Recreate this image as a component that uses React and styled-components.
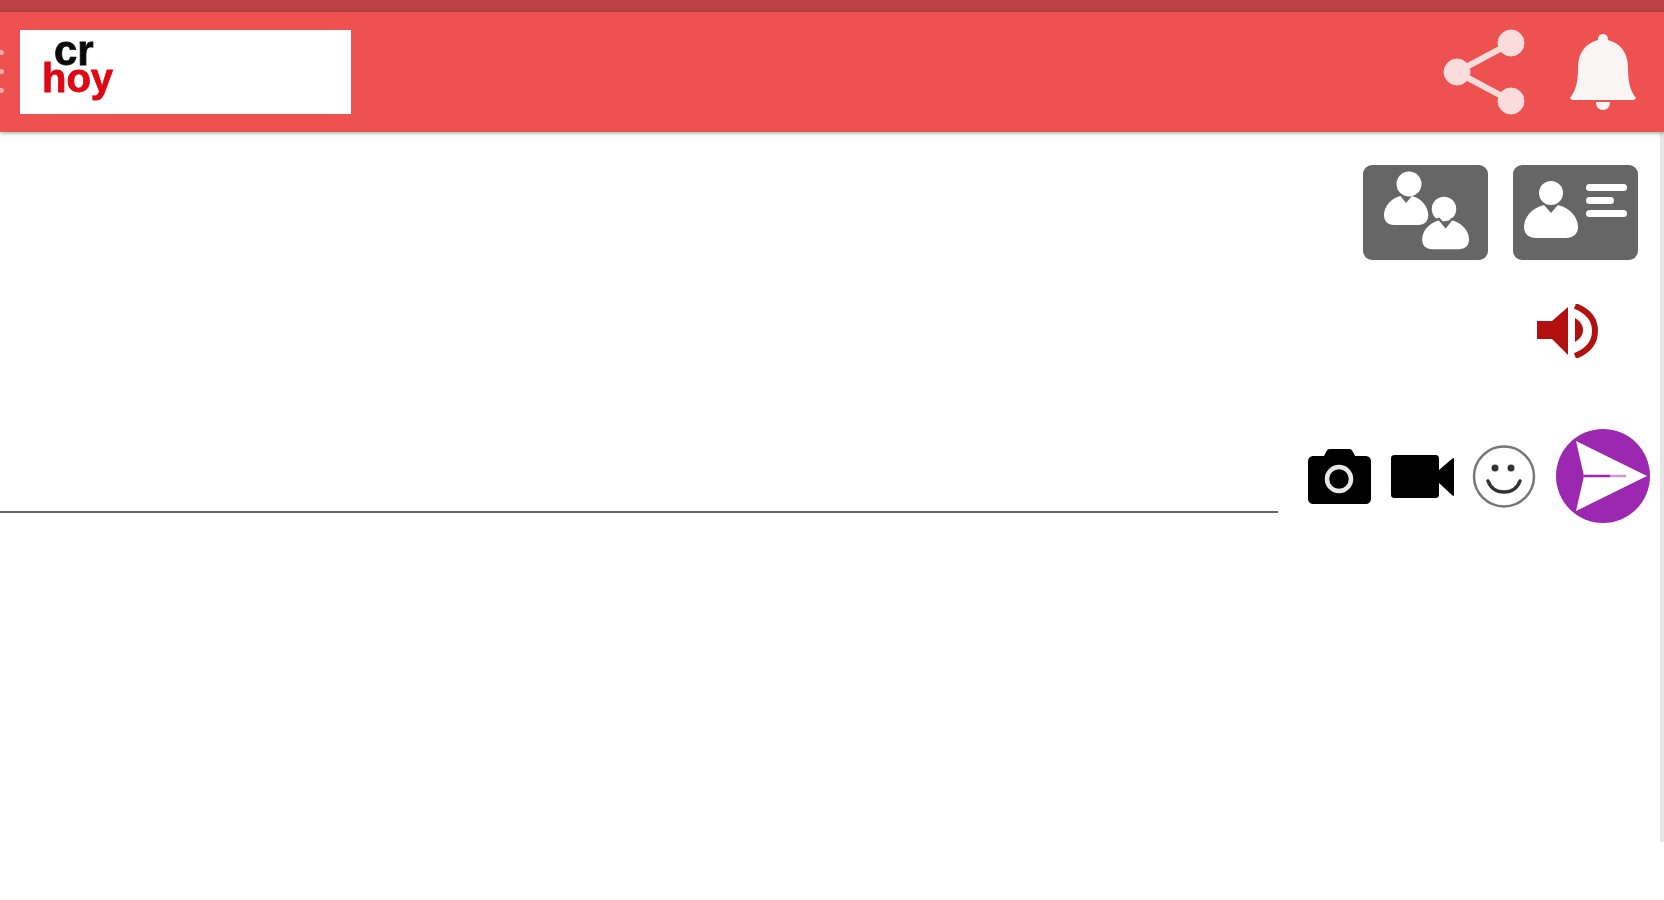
import React from "react";
import styled, { createGlobalStyle } from "styled-components";

const GlobalStyle = createGlobalStyle`
  html, body {
    margin: 0;
    padding: 0;
    background: #fff;
    font-family: "Liberation Sans", Arial, sans-serif;
  }
  * { box-sizing: border-box; }
`;

const Page = styled.div`
  width: 1664px;
  height: 900px;
  overflow: hidden;
  background: #fff;
  display: flex;
  flex-direction: column;
`;

const StatusStrip = styled.div`
  height: 12px;
  background: #bb4244;
`;

const Header = styled.header`
  height: 120px;
  background: #ee5250;
  box-shadow: 0 1px 4px rgba(0, 0, 0, 0.4);
  display: flex;
  align-items: center;
  position: relative;
  z-index: 1;
`;

const MenuDots = styled.div`
  width: 20px;
  display: flex;
  flex-direction: column;
  gap: 14px;
  margin-top: -2px;

  span {
    width: 4px;
    height: 5px;
    border-radius: 0 3px 3px 0;
    background: #f7a9a7;
  }
`;

const LogoBox = styled.div`
  width: 331px;
  height: 84px;
  background: #fff;
  padding: 8px 0 0 22px;
  display: flex;
  flex-direction: column;
  font-weight: 700;
  filter: blur(0.5px);
`;

const LogoCr = styled.span`
  color: #0a0a0a;
  font-size: 42px;
  line-height: 26px;
  margin-left: 12px;
  -webkit-text-stroke: 0.8px #0a0a0a;
`;

const LogoHoy = styled.span`
  color: #e00613;
  font-size: 40px;
  line-height: 28px;
  -webkit-text-stroke: 0.8px #e00613;
`;

const HeaderActions = styled.div`
  margin-left: auto;
  display: flex;
  align-items: center;
  gap: 45px;
  padding-right: 28px;
  filter: blur(0.5px);
`;

const Body = styled.main`
  height: 710px;
  border-right: 4px solid #e6e6e6;
  display: flex;
  flex-direction: column;
`;

const ToggleRow = styled.div`
  display: flex;
  justify-content: flex-end;
  gap: 25px;
  padding: 33px 22px 0 0;
`;

const ToggleButton = styled.button`
  width: 125px;
  height: 95px;
  padding: 0;
  border: none;
  border-radius: 9px;
  background: #666;
  display: flex;
  align-items: center;
  justify-content: center;
  filter: blur(0.7px);
`;

const SoundRow = styled.div`
  display: flex;
  justify-content: flex-end;
  padding: 44px 60px 0 0;
  filter: blur(0.5px);
`;

const Composer = styled.div`
  display: flex;
  align-items: center;
  gap: 20px;
  padding: 70px 10px 0 0;
`;

const MessageInput = styled.input`
  flex: 1;
  align-self: flex-start;
  height: 85px;
  margin-right: 10px;
  padding: 0;
  border: none;
  border-bottom: 2px solid #666;
  outline: none;
  background: transparent;
`;

const ComposerIcon = styled.span`
  display: flex;
  margin-left: ${(props) => props.$pull || 0}px;
  filter: blur(0.4px);
`;

const Share = () => (
  <svg width="82" height="86" viewBox="0 0 82 86">
    <g fill="#fbdcdc" stroke="#fbdcdc">
      <path d="M14 43 68 14M14 43 68 72" strokeWidth="6" fill="none" />
      <circle cx="14" cy="43" r="13" />
      <circle cx="68" cy="14" r="13" />
      <circle cx="68" cy="72" r="13" />
    </g>
  </svg>
);

const Bell = () => (
  <svg width="66" height="76" viewBox="0 0 66 76">
    <path
      fill="#f9f5f5"
      d="M33 0c3 0 5 2 5 6C50 9 58 18 58 34c0 14 2 22 8 30l-2 2H2l-2-2c6-8 8-16 8-30C8 18 16 9 28 6 28 2 30 0 33 0z"
    />
    <path fill="#f9f5f5" d="M26 68h14c0 5-3 8-7 8s-7-3-7-8z" />
  </svg>
);

const PERSON_BODY =
  "M27 8 20 0C7 3 0 13 0 22c0 7 5 11 12 11h30c7 0 12-4 12-11 0-9-7-19-20-22z";

const GroupIcon = () => (
  <svg width="125" height="95" viewBox="0 0 125 95">
    <g fill="#fff">
      <circle cx="46" cy="19" r="12.500" />
      <path d={PERSON_BODY} transform="translate(21 31) scale(0.82 0.88)" />
      <circle cx="81" cy="44" r="13.500" stroke="#666" strokeWidth="2.500" />
      <path
        d={PERSON_BODY}
        stroke="#666"
        strokeWidth="2.500"
        transform="translate(58 54) scale(0.91 0.95)"
      />
    </g>
  </svg>
);

const ContactIcon = () => (
  <svg width="125" height="95" viewBox="0 0 125 95">
    <g fill="#fff">
      <circle cx="38" cy="28" r="12" />
      <path d={PERSON_BODY} transform="translate(11 40)" />
      <rect x="73" y="19" width="41" height="7" rx="3.500" />
      <rect x="73" y="32" width="28" height="7" rx="3.500" />
      <rect x="73" y="45" width="41" height="7" rx="3.500" />
    </g>
  </svg>
);

const Speaker = () => (
  <svg width="63" height="54" viewBox="0 0 63 54">
    <path fill="#b31010" d="M0 17h15L31 3v48L15 35H0z" />
    <path fill="#b31010" d="M38 14c5 3 8 7 8 12s-3 9-8 12z" />
    <path fill="none" stroke="#b31010" strokeWidth="6" d="M38 2c13 5 20 14 20 25s-7 20-20 25" />
  </svg>
);

const Camera = () => (
  <svg width="63" height="57" viewBox="0 0 63 57">
    <path
      fill="#000"
      d="M22 1h19c2 0 3 1 4 3l2 4h10c4 0 6 2 6 6v36c0 4-2 6-6 6H6c-4 0-6-2-6-6V14c0-4 2-6 6-6h10l2-4c1-2 2-3 4-3z"
    />
    <circle cx="31" cy="31" r="12" fill="none" stroke="#e8e8e8" strokeWidth="4.500" />
  </svg>
);

const Video = () => (
  <svg width="63" height="43" viewBox="0 0 63 43">
    <path
      fill="#000"
      d="M4 0h40c3 0 4 1 4 4v11L62 3c1 0 1 1 1 1v36s0 1-1 1L48 28v11c0 3-1 4-4 4H4c-3 0-4-1-4-4V4c0-3 1-4 4-4z"
    />
  </svg>
);

const Smile = () => (
  <svg width="64" height="63" viewBox="0 0 64 63">
    <circle cx="32" cy="31.500" r="30" fill="#fff" stroke="#777" strokeWidth="2.500" />
    <circle cx="23" cy="23" r="3.500" fill="#333" />
    <circle cx="39" cy="23" r="3.500" fill="#333" />
    <path d="M16 36c3 8 9 11 16 11s13-3 16-11" fill="none" stroke="#333" strokeWidth="3.500" strokeLinecap="round" />
  </svg>
);

const Send = () => (
  <svg width="94" height="96" viewBox="0 0 94 96">
    <circle cx="47" cy="48" r="47" fill="#9c27b0" />
    <path fill="#fff" d="M20 13 91 48 20 83 28 48z" />
    <path stroke="#9c27b0" strokeWidth="2.500" d="M28 48h26" />
    <path stroke="#ce93d8" strokeWidth="2.500" d="M54 48h16" />
  </svg>
);

export default function App() {
  return (
    <>
      <GlobalStyle />
      <Page>
        <StatusStrip />
        <Header>
          <MenuDots>
            <span />
            <span />
            <span />
          </MenuDots>
          <LogoBox>
            <LogoCr>cr</LogoCr>
            <LogoHoy>hoy</LogoHoy>
          </LogoBox>
          <HeaderActions>
            <Share />
            <Bell />
          </HeaderActions>
        </Header>
        <Body>
          <ToggleRow>
            <ToggleButton>
              <GroupIcon />
            </ToggleButton>
            <ToggleButton>
              <ContactIcon />
            </ToggleButton>
          </ToggleRow>
          <SoundRow>
            <Speaker />
          </SoundRow>
          <Composer>
            <MessageInput type="text" />
            <ComposerIcon>
              <Camera />
            </ComposerIcon>
            <ComposerIcon>
              <Video />
            </ComposerIcon>
            <ComposerIcon $pull={-2}>
              <Smile />
            </ComposerIcon>
            <ComposerIcon>
              <Send />
            </ComposerIcon>
          </Composer>
        </Body>
      </Page>
    </>
  );
}
